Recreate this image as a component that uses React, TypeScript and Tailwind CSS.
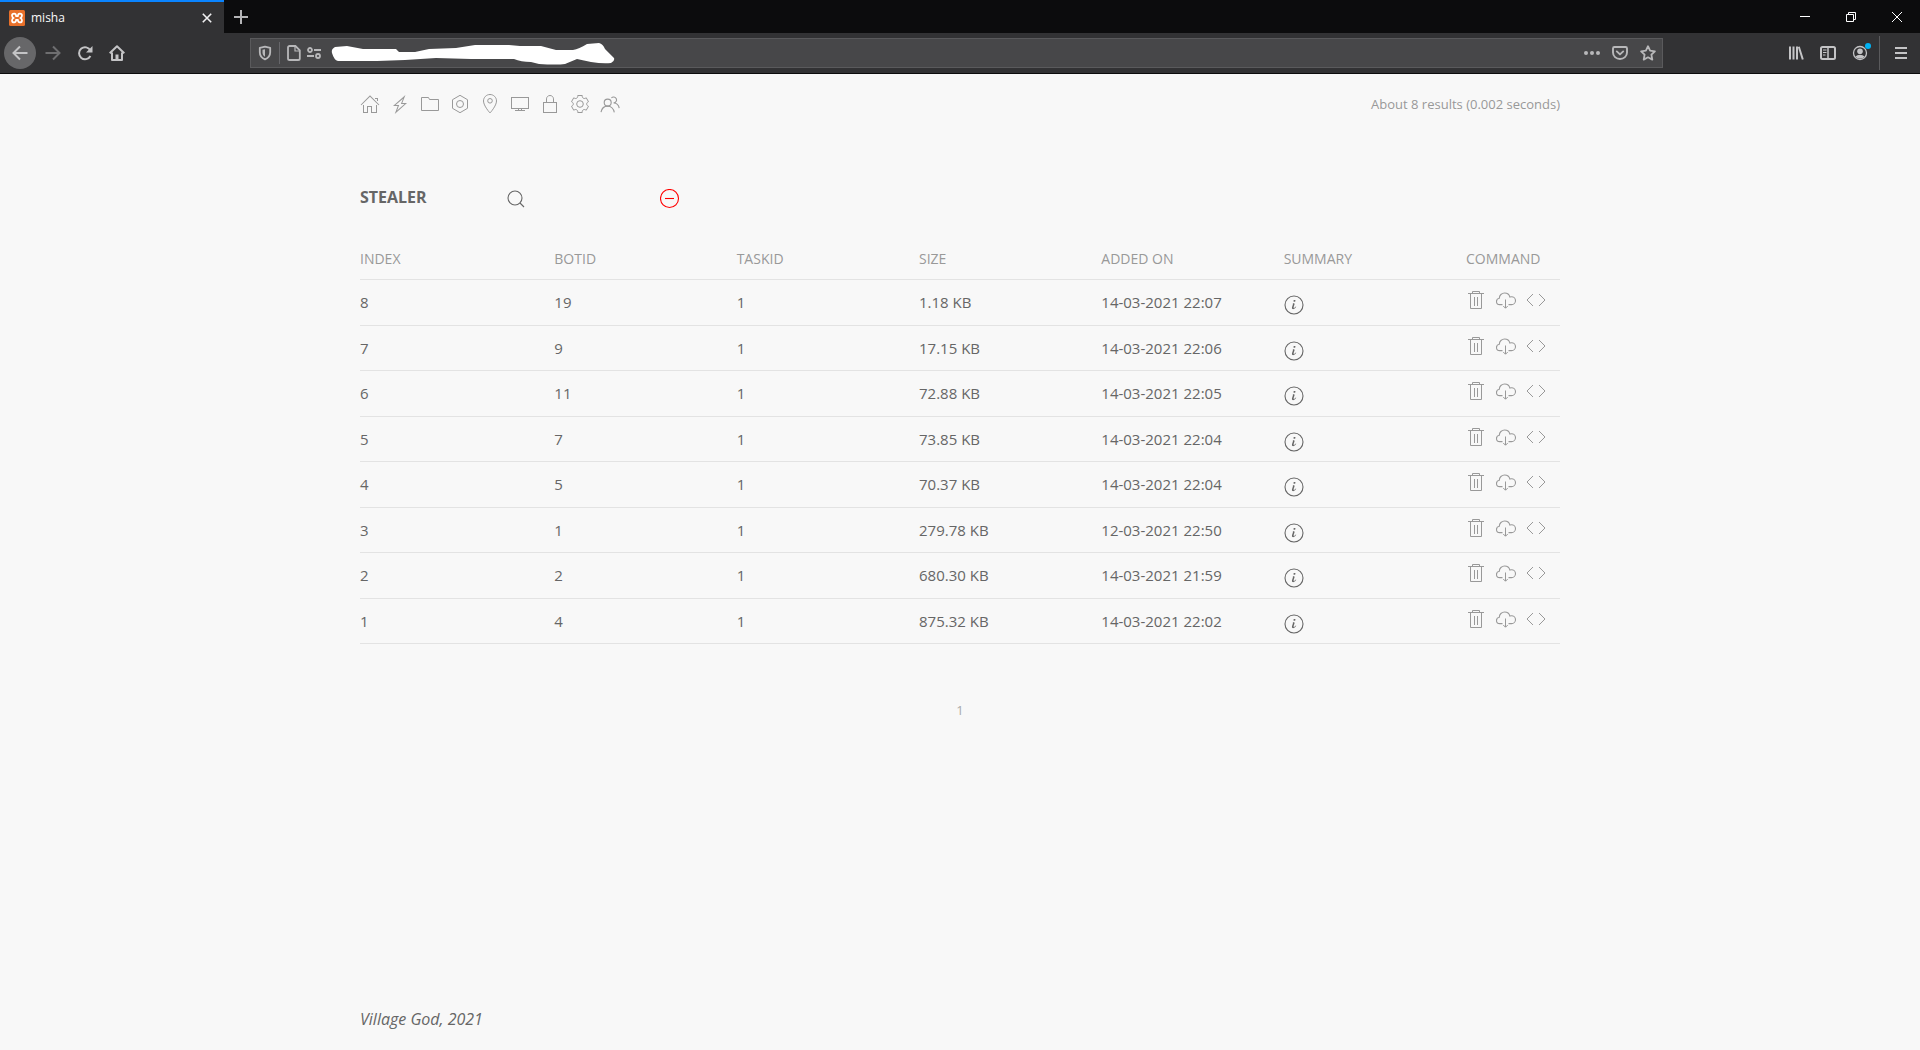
import type { ReactNode } from "react";

type IconProps = {
  children: ReactNode;
  size?: string;
  viewBox?: string;
  strokeWidth?: number;
};

function Icon({ children, size = "size-5", viewBox = "0 0 20 20", strokeWidth = 1 }: IconProps) {
  return (
    <svg
      viewBox={viewBox}
      className={`${size} block shrink-0`}
      fill="none"
      stroke="currentColor"
      strokeWidth={strokeWidth}
      aria-hidden="true"
    >
      {children}
    </svg>
  );
}

const navLinks = [
  {
    label: "Home",
    icon: (
      <g fill="currentColor" stroke="none">
        <polygon points="18.65 11.35 10 2.71 1.35 11.35 0.65 10.65 10 1.29 19.35 10.65" />
        <polygon points="15 4 18 4 18 7 17 7 17 5 15 5" />
        <polygon points="3 11 4 11 4 18 7 18 7 12 12 12 12 18 16 18 16 11 17 11 17 19 11 19 11 13 8 13 8 19 3 19" />
      </g>
    ),
  },
  {
    label: "Tasks",
    icon: (
      <path
        fill="currentColor"
        stroke="none"
        d="M4.74,20 L7.73,12 L3,12 L15.43,1 L12.32,9 L17.02,9 L4.74,20 Z M9.18,11 L7.1,16.39 L14.47,10 L10.86,10 L12.99,4.67 L5.61,11 L9.18,11 Z"
      />
    ),
  },
  { label: "Files", icon: <polygon points="9.5 5.5 8.5 3.5 1.5 3.5 1.5 16.5 18.5 16.5 18.5 5.5" /> },
  {
    label: "Modules",
    icon: (
      <>
        <polygon points="2.5,5.7 10,1.3 17.5,5.7 17.5,14.3 10,18.7 2.5,14.3" />
        <circle cx="10" cy="10" r="3.5" />
      </>
    ),
  },
  {
    label: "Locations",
    icon: (
      <>
        <path d="M10,0.5 C6.41,0.5 3.5,3.39 3.5,6.98 C3.5,11.83 10,19 10,19 C10,19 16.5,11.83 16.5,6.98 C16.5,3.39 13.59,0.5 10,0.5 L10,0.5 Z" />
        <circle cx="10" cy="6.8" r="2.3" />
      </>
    ),
  },
  {
    label: "Desktop",
    icon: (
      <>
        <rect x="1.5" y="3.5" width="17" height="11" />
        <g fill="currentColor" stroke="none">
          <rect x="8" y="15" width="1" height="2" />
          <rect x="11" y="15" width="1" height="2" />
          <rect x="5" y="16" width="10" height="1" />
        </g>
      </>
    ),
  },
  {
    label: "Lock",
    icon: (
      <>
        <rect x="3.5" y="8.5" width="13" height="10" />
        <path d="M6.5,8 L6.5,4.88 C6.5,3.01 8.07,1.5 10,1.5 C11.93,1.5 13.5,3.01 13.5,4.88 L13.5,8" />
      </>
    ),
  },
  {
    label: "Settings",
    icon: (
      <>
        <circle cx="9.997" cy="10" r="3.31" />
        <path d="M18.488,12.285 L16.205,16.237 C15.322,15.496 14.185,15.281 13.303,15.791 C12.428,16.289 12.047,17.373 12.246,18.5 L7.735,18.5 C7.938,17.374 7.553,16.299 6.684,15.791 C5.801,15.27 4.655,15.492 3.773,16.237 L1.5,12.285 C2.573,11.871 3.317,10.999 3.317,9.991 C3.305,8.98 2.573,8.121 1.5,7.716 L3.765,3.784 C4.645,4.516 5.794,4.738 6.687,4.232 C7.555,3.722 7.939,2.637 7.735,1.5 L12.263,1.5 C12.072,2.637 12.441,3.71 13.314,4.22 C14.206,4.73 15.343,4.516 16.225,3.794 L18.487,7.714 C17.404,8.117 16.661,8.988 16.67,10.009 C16.672,11.018 17.415,11.88 18.488,12.285 Z" />
      </>
    ),
  },
  {
    label: "Users",
    icon: (
      <g strokeWidth="1.1">
        <circle cx="7.7" cy="8.6" r="3.5" />
        <path d="M1,18.1 C1.7,14.6 4.4,12.1 7.6,12.1 C10.9,12.1 13.7,14.8 14.3,18.3" />
        <path d="M11.4,4 C12.8,2.4 15.4,2.8 16.3,4.7 C17.2,6.6 15.7,8.9 13.6,8.9 C16.5,8.9 18.8,11.3 19.2,14.1" />
      </g>
    ),
  },
];

const columns = ["Index", "BotID", "TaskID", "Size", "Added on", "Summary", "Command"];

const rows = [
  { index: 8, bot: 19, task: 1, size: "1.18 KB", added: "14-03-2021 22:07" },
  { index: 7, bot: 9, task: 1, size: "17.15 KB", added: "14-03-2021 22:06" },
  { index: 6, bot: 11, task: 1, size: "72.88 KB", added: "14-03-2021 22:05" },
  { index: 5, bot: 7, task: 1, size: "73.85 KB", added: "14-03-2021 22:04" },
  { index: 4, bot: 5, task: 1, size: "70.37 KB", added: "14-03-2021 22:04" },
  { index: 3, bot: 1, task: 1, size: "279.78 KB", added: "12-03-2021 22:50" },
  { index: 2, bot: 2, task: 1, size: "680.30 KB", added: "14-03-2021 21:59" },
  { index: 1, bot: 4, task: 1, size: "875.32 KB", added: "14-03-2021 22:02" },
];

function TabStrip() {
  return (
    <div className="flex h-[33px] bg-[#0c0c0d]">
      <div className="flex w-56 items-center border-t-2 border-[#0a84ff] bg-[#323234] pr-3 pl-[9px]">
        <svg viewBox="0 0 16 16" className="size-4 shrink-0" aria-hidden="true">
          <rect width="16" height="16" rx="1.5" fill="#e8702a" />
          <path
            d="M5.2 3.6Q7 3.600 7.200 6.200h1.600Q9 3.600 10.800 3.600q2.200 0 2.200 2 0 1.400-1.400 2.400 1.400 1 1.400 2.400 0 2-2.200 2Q9 12.400 8.800 9.800H7.200Q7 12.400 5.200 12.400 3 12.400 3 10.400 3 9 4.400 8 3 7 3 5.600q0-2 2.200-2z"
            fill="none"
            stroke="#fff"
            strokeWidth="1.7"
          />
        </svg>
        <span className="ml-1.5 flex-1 text-xs text-[#f9f9fa]">misha</span>
        <button aria-label="Close tab" className="text-[#f0f0f2]">
          <Icon size="size-2.5" viewBox="0 0 10 10" strokeWidth={1.6}>
            <path d="M.8.8l8.4 8.4M9.2.8L.8 9.2" />
          </Icon>
        </button>
      </div>
      <button aria-label="New tab" className="flex w-[34px] items-center justify-center text-[#b5b5b7]">
        <Icon size="size-3.5" viewBox="0 0 14 14" strokeWidth={2}>
          <path d="M7 0v14M0 7h14" />
        </Icon>
      </button>
      <div className="ml-auto flex text-white">
        <button aria-label="Minimize" className="flex w-[46px] items-center justify-center">
          <Icon size="size-2.5" viewBox="0 0 10 10">
            <path d="M0 4.5h10" />
          </Icon>
        </button>
        <button aria-label="Restore" className="flex w-[46px] items-center justify-center">
          <Icon size="size-2.5" viewBox="0 0 10 10">
            <path d="M.5 2.5h7v7h-7zM2.5 2.5v-2h7v7h-2" />
          </Icon>
        </button>
        <button aria-label="Close window" className="flex w-[46px] items-center justify-center">
          <Icon size="size-2.5" viewBox="0 0 10 10">
            <path d="M0 0l10 10M10 0L0 10" />
          </Icon>
        </button>
      </div>
    </div>
  );
}

function ToolButton({ label, className = "", children }: { label: string; className?: string; children: ReactNode }) {
  return (
    <button aria-label={label} className={`flex size-8 items-center justify-center rounded-full ${className}`}>
      <Icon size="size-4" viewBox="0 0 16 16" strokeWidth={2}>
        {children}
      </Icon>
    </button>
  );
}

function AddressBar() {
  return (
    <div className="mx-[117px] flex h-[30px] flex-1 items-center border border-[#5a5a5c] bg-[#474749] px-1.5 text-[#b8b8ba]">
      <button aria-label="Tracking protection">
        <Icon size="size-4" viewBox="0 0 16 16" strokeWidth={1.8}>
          <path d="M8 1.700l5.200 1.100v4.400c0 3.300-2 5.800-5.200 7.200-3.200-1.400-5.200-3.900-5.200-7.200V2.800z" strokeLinejoin="round" />
          <path d="M8 4.200v7.600c-1.600-1.100-2.500-2.600-2.500-4.600V4.800z" fill="currentColor" stroke="none" />
        </Icon>
      </button>
      <span className="mx-1.5 h-[22px] w-px bg-[#66666a]" />
      <button aria-label="Site information">
        <Icon size="size-4" viewBox="0 0 16 16" strokeWidth={1.8}>
          <path d="M3.6 1h5.800L13.800 5.400v8a1.600 1.600 0 0 1-1.600 1.600H3.600A1.600 1.600 0 0 1 2 13.400V2.600A1.600 1.600 0 0 1 3.600 1z" />
          <path d="M9 1v5h4.800" strokeWidth="1.2" />
        </Icon>
      </button>
      <button aria-label="Permissions" className="ml-1">
        <Icon size="size-4" viewBox="0 0 16 16" strokeWidth={1.8}>
          <circle cx="4" cy="5" r="2" />
          <path d="M8 5h7M1 11h7" />
          <circle cx="12" cy="11" r="2" />
        </Icon>
      </button>
      <svg viewBox="0 0 286 24" className="ml-2 h-6 w-[286px]" aria-hidden="true">
        <path
          d="M5 6Q1 8 2 12Q4 19 8 20L47 20L75 19L106 17L141 18L184 18Q191 21 201 21L209 23Q227 24 235 23L247 18L261 21Q273 23 281 22Q285 20 284 17L275 8Q273 3 269 2L257 3Q249 8 243 9L226 9L211 5L190 5L179 4L145 4L126 7L99 8L85 11L69 11L66 8L33 8L17 5Z"
          fill="#fff"
        />
      </svg>
      <input aria-label="Address" className="h-full min-w-0 flex-1 bg-transparent px-2 text-sm text-white outline-none" />
      <div className="flex gap-3">
        <button aria-label="Page actions">
          <Icon size="size-4" viewBox="0 0 16 16">
            <g fill="currentColor" stroke="none">
              <circle cx="2" cy="8" r="2" />
              <circle cx="8" cy="8" r="2" />
              <circle cx="14" cy="8" r="2" />
            </g>
          </Icon>
        </button>
        <button aria-label="Save to Pocket">
          <Icon size="size-4" viewBox="0 0 16 16" strokeWidth={1.9}>
            <path d="M2.4 2h11.2A1.4 1.4 0 0 1 15 3.4V7.5a7 6.500 0 0 1-14 0V3.400A1.400 1.400 0 0 1 2.400 2z" />
            <path d="M4.8 6.4L8 9.400l3.200-3" strokeLinecap="round" strokeLinejoin="round" />
          </Icon>
        </button>
        <button aria-label="Bookmark">
          <Icon size="size-4" viewBox="0 0 16 16" strokeWidth={1.8}>
            <path d="M8 1.200l2.100 4.400 4.800.700-3.500 3.400.900 4.900L8 12.300l-4.300 2.300.900-4.900L1.100 6.300l4.800-.700z" strokeLinejoin="round" />
          </Icon>
        </button>
      </div>
    </div>
  );
}

function Toolbar() {
  return (
    <div className="flex h-[41px] items-center border-b border-[#0c0c0d] bg-[#323234] pr-[3px] pl-1 text-[#c4c4c6]">
      <ToolButton label="Back" className="bg-[#676769]">
        <path d="M15.5 8H1.5M8 1.5L1.5 8 8 14.500" />
      </ToolButton>
      <ToolButton label="Forward" className="ml-px text-[#6e6e70]">
        <path d="M.5 8h14M8 1.500L14.500 8 8 14.500" />
      </ToolButton>
      <ToolButton label="Reload">
        <path d="M13.4 5.500A6 6 0 1 0 13.400 11" />
        <path d="M15.5 1v6.500H9z" fill="currentColor" stroke="none" />
      </ToolButton>
      <ToolButton label="Home page">
        <path d="M.7 8.200L8 1.300l7.300 6.900M3 7.500V15h10V7.500" strokeLinejoin="round" />
        <path d="M8 15V9.500" strokeWidth="3" />
      </ToolButton>

      <AddressBar />

      <ToolButton label="Library">
        <path d="M2 1.500v13M5.500 1.500v13M9 1.500v13M10.800 1.800l4 12.700" />
      </ToolButton>
      <ToolButton label="Sidebars">
        <rect x="1" y="2" width="14" height="12" rx="1.5" />
        <path d="M8 2v12" strokeWidth="1.5" />
        <path d="M3 5h3.500M3 7.500h3.500M3 10h2.500" strokeWidth="1" />
      </ToolButton>
      <div className="relative">
        <ToolButton label="Account">
          <circle cx="8" cy="8" r="6.5" strokeWidth="1.3" />
          <circle cx="8" cy="6.300" r="2.8" fill="currentColor" stroke="none" />
          <path d="M3.4 11.400Q5 9.800 8 9.800t4.600 1.600Q11 13.600 8 13.600t-4.600-2.200z" fill="currentColor" stroke="none" />
        </ToolButton>
        <span className="absolute top-1.5 right-[5px] size-1.5 rounded-full bg-[#00b3f4]" />
      </div>
      <span className="mr-[5px] ml-[3px] h-[34px] w-px bg-[#5a5a5c]" />
      <ToolButton label="Open menu">
        <path d="M2 3h12M2 8h12M2 13h12" />
      </ToolButton>
    </div>
  );
}

function ResultsTable() {
  return (
    <table className="w-full table-fixed border-collapse text-left">
      <thead>
        <tr className="h-[42px] border-b border-[#e3e3e3] text-sm text-[#999]">
          {columns.map((column) => (
            <th key={column} className="px-3 pt-0.5 font-normal uppercase first:pl-0 last:w-[106px] last:pr-0">
              {column}
            </th>
          ))}
        </tr>
      </thead>
      <tbody>
        {rows.map((row) => (
          <tr
            key={row.index}
            className="border-b border-[#e3e3e3] align-top text-[15px] leading-6 odd:h-[46px] even:h-[45px]"
          >
            <td className="pt-2.5 pr-3">{row.index}</td>
            <td className="px-3 pt-2.5">{row.bot}</td>
            <td className="px-3 pt-2.5">{row.task}</td>
            <td className="px-3 pt-2.5">{row.size}</td>
            <td className="px-3 pt-2.5">{row.added}</td>
            <td className="px-3 pt-[15px]">
              <button aria-label="Summary" className="block">
                <Icon strokeWidth={1.1}>
                  <path
                    fill="currentColor"
                    stroke="none"
                    d="M12.13,11.59 C11.97,12.84 10.35,14.12 9.1,14.16 C6.17,14.2 9.89,9.46 8.74,8.37 C9.3,8.16 10.62,7.83 10.62,8.81 C10.62,9.63 10.12,10.55 9.88,11.32 C8.66,15.16 12.13,11.15 12.14,11.18 C12.16,11.21 12.16,11.35 12.13,11.59 Z M11.56,5.67 C11.56,6.67 9.36,7.15 9.36,6.03 C9.36,5 11.56,4.54 11.56,5.67 Z"
                  />
                  <circle cx="10" cy="10" r="9" />
                </Icon>
              </button>
            </td>
            <td className="pt-2.5 pl-3 text-[#999]">
              <div className="flex gap-2.5">
                <button aria-label="Delete">
                  <Icon>
                    <polyline points="6.5 3 6.5 1.5 13.5 1.5 13.5 3" />
                    <polyline points="4.5 4 4.5 18.5 15.5 18.5 15.5 4" />
                    <g fill="currentColor" stroke="none">
                      <rect x="8" y="7" width="1" height="9" />
                      <rect x="11" y="7" width="1" height="9" />
                      <rect x="2" y="3" width="16" height="1" />
                    </g>
                  </Icon>
                </button>
                <button aria-label="Download">
                  <Icon>
                    <path
                      strokeWidth="1.1"
                      d="M6.5,14.61 L3.75,14.61 C1.96,14.61 0.5,13.17 0.5,11.39 C0.5,9.76 1.72,8.41 3.3,8.2 C3.38,5.31 5.75,3 8.68,3 C11.19,3 13.31,4.71 13.89,7.02 C14.39,6.8 14.93,6.68 15.5,6.68 C17.71,6.68 19.5,8.45 19.5,10.64 C19.5,12.83 17.71,14.6 15.5,14.6 L12.5,14.6"
                    />
                    <polyline points="11.75 16 9.5 18.25 7.25 16" />
                    <path d="M9.5,18 L9.5,9.5" />
                  </Icon>
                </button>
                <button aria-label="View source">
                  <Icon>
                    <polyline points="13,4 19,10 13,16" />
                    <polyline points="7,4 1,10 7,16" />
                  </Icon>
                </button>
              </div>
            </td>
          </tr>
        ))}
      </tbody>
    </table>
  );
}

export default function App() {
  return (
    <div className="flex min-h-screen flex-col bg-[#f8f8f8] font-['Open_Sans','Noto_Sans',sans-serif] text-[#666]">
      <header>
        <TabStrip />
        <Toolbar />
      </header>

      <div className="mx-auto flex w-full max-w-[1200px] flex-1 flex-col pt-5">
        <div className="flex items-center justify-between text-[#999]">
          <nav className="flex gap-2.5">
            {navLinks.map((link) => (
              <a key={link.label} href="#" aria-label={link.label}>
                <Icon>{link.icon}</Icon>
              </a>
            ))}
          </nav>
          <span className="text-[13px] leading-5">About 8 results (0.002 seconds)</span>
        </div>

        <main className="pt-[75px]">
          <form className="flex h-5 items-start" onSubmit={(e) => e.preventDefault()}>
            <h1 className="w-[146px] text-base leading-4 font-bold">STEALER</h1>
            <label htmlFor="search" aria-label="Search">
              <Icon strokeWidth={1.1}>
                <circle cx="9" cy="9" r="7" />
                <path d="M14,14 L18,18" />
              </Icon>
            </label>
            <input id="search" type="search" className="h-5 w-[134px] bg-transparent px-2 text-[15px] outline-none" />
            <button type="button" aria-label="Remove all" className="text-[#f00]">
              <Icon strokeWidth={1.1}>
                <circle cx="9.5" cy="9.5" r="9" />
                <path d="M5 9.5h9" />
              </Icon>
            </button>
          </form>

          <div className="mt-7">
            <ResultsTable />
          </div>

          <nav className="mt-14 flex justify-center">
            <a href="#" className="text-[13px] leading-5 text-[#aaa]">
              1
            </a>
          </nav>
        </main>

        <footer className="mt-auto pb-[19px] text-base leading-6 italic">Village God, 2021</footer>
      </div>
    </div>
  );
}
